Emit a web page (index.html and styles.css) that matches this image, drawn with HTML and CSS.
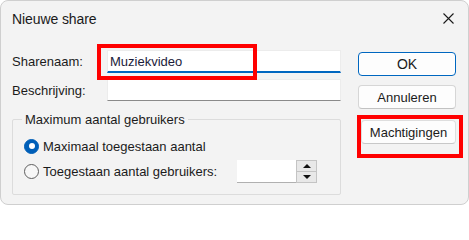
FILE: index.html
```html
<!DOCTYPE html>
<html lang="nl">
<head>
<meta charset="utf-8">
<title>Nieuwe share</title>
<link rel="stylesheet" href="styles.css">
</head>
<body>
<div class="window">
  <div class="titlebar">
    <span class="title">Nieuwe share</span>
    <svg class="close" width="11" height="11" viewBox="0 0 11 11" aria-hidden="true">
      <path d="M0.5 0.5 L10.5 10.5 M10.5 0.5 L0.5 10.5" stroke="#1a1a1a" stroke-width="1.1" fill="none"/>
    </svg>
  </div>
  <div class="main">
    <div class="form">
      <div class="row">
        <label class="lbl">Sharenaam:</label>
        <input class="field focused" type="text" value="Muziekvideo">
      </div>
      <div class="row row2">
        <label class="lbl">Beschrijving:</label>
        <input class="field" type="text" value="">
      </div>
      <fieldset class="group">
        <legend class="legend">Maximum aantal gebruikers</legend>
        <div class="opt opt1">
          <span class="radio checked"></span>
          <span class="opt-text">Maximaal toegestaan aantal</span>
        </div>
        <div class="opt opt2">
          <span class="radio"></span>
          <span class="opt-text fixed">Toegestaan aantal gebruikers:</span>
          <div class="spin">
            <div class="spin-field"></div>
            <div class="spin-btns">
              <div class="spin-btn"><span class="tri up"></span></div>
              <div class="spin-btn"><span class="tri down"></span></div>
            </div>
          </div>
        </div>
      </fieldset>
    </div>
    <div class="buttons">
      <div class="btn default">OK</div>
      <div class="btn">Annuleren</div>
      <div class="btn perm">Machtigingen</div>
    </div>
  </div>
  <div class="mark mark1"></div>
  <div class="mark mark2"></div>
</div>
</body>
</html>
```

FILE: styles.css
```css
* { box-sizing: border-box; }

html, body {
  margin: 0;
  padding: 0;
  background: #ffffff;
}

body {
  font-family: "Liberation Sans", Arial, sans-serif;
  font-size: 13px;
  color: #1b1b1b;
}

.window {
  position: relative;
  width: 469px;
  height: 205px;
  background: #f3f3f3;
  border: 1px solid #cfcfcf;
  border-radius: 8px;
  overflow: hidden;
}

.titlebar {
  height: 35px;
  display: flex;
  align-items: center;
  justify-content: space-between;
  padding: 0 14px 0 11px;
}

.title {
  font-size: 14px;
  color: #1a1a1a;
  letter-spacing: -0.1px;
}

.close {
  display: block;
}

.main {
  display: flex;
  padding: 14px 12px 0 11px;
}

.form {
  width: 329px;
  display: flex;
  flex-direction: column;
}

.row {
  display: flex;
  align-items: center;
  height: 23px;
}

.row2 {
  margin-top: 6px;
  height: 22px;
}

.lbl {
  width: 95px;
  flex: 0 0 95px;
  line-height: 15px;
}

.field {
  flex: 0 0 234px;
  width: 234px;
  height: 100%;
  margin: 0;
  padding: 0 0 0 2px;
  font-family: "Liberation Sans", Arial, sans-serif;
  font-size: 13px;
  color: #1b1b3a;
  background: #ffffff;
  border: 1px solid #ececec;
  border-bottom: 1px solid #8a8a8a;
  border-radius: 0;
  outline: none;
}

.field.focused {
  border-bottom: 2px solid #0067c0;
  padding-top: 1px;
}

.group {
  margin: 11px 0 0 0;
  padding: 0 0 11px 11px;
  border: 1px solid #dcdcdc;
  border-radius: 2px;
  min-width: 0;
}

.legend {
  padding: 0 3px;
  margin-left: -2px;
  line-height: 15px;
}

.opt {
  display: flex;
  align-items: center;
}

.opt1 {
  margin-top: 9px;
  height: 20px;
}

.opt2 {
  margin-top: 4px;
  height: 23px;
}

.radio {
  width: 15px;
  height: 15px;
  flex: 0 0 15px;
  border-radius: 50%;
  border: 1px solid #5f5f5f;
  background: #f7f7f7;
  margin-right: 4px;
  position: relative;
}

.radio.checked {
  background: #005fb8;
  border-color: #005fb8;
}

.radio.checked::after {
  content: "";
  position: absolute;
  left: 3.5px;
  top: 3.5px;
  width: 6px;
  height: 6px;
  border-radius: 50%;
  background: #ffffff;
}

.opt-text {
  line-height: 15px;
  white-space: nowrap;
}

.opt-text.fixed {
  width: 194px;
  flex: 0 0 194px;
}

.spin {
  display: flex;
  height: 23px;
}

.spin-field {
  width: 59px;
  height: 23px;
  background: #ffffff;
  border-bottom: 1px solid #b0b0b0;
}

.spin-btns {
  width: 21px;
  height: 23px;
  display: flex;
  flex-direction: column;
  border: 1px solid #c4c4c4;
  background: #e8e8e8;
}

.spin-btn {
  flex: 1;
  display: flex;
  align-items: center;
  justify-content: center;
}

.spin-btn + .spin-btn {
  border-top: 1px solid #c4c4c4;
}

.tri {
  width: 0;
  height: 0;
  border-left: 4px solid transparent;
  border-right: 4px solid transparent;
}

.tri.up {
  border-bottom: 4px solid #111;
}

.tri.down {
  border-top: 4px solid #111;
}

.buttons {
  margin-left: 17px;
  width: 98px;
  display: flex;
  flex-direction: column;
  padding-top: 2px;
}

.btn {
  height: 24px;
  display: flex;
  align-items: center;
  justify-content: center;
  background: #fdfdfd;
  border: 1px solid #d6d6d6;
  border-bottom-color: #c2c2c2;
  border-radius: 4px;
  color: #1b1b1b;
  line-height: 15px;
}

.btn + .btn {
  margin-top: 9px;
}

.btn.default {
  border: 1px solid #0067c0;
  box-shadow: inset 0 0 0 1px #ffffff;
  font-size: 14px;
}

.btn.perm {
  margin-top: 11px;
  margin-left: 3px;
  border-color: #dedede;
  border-bottom-color: #c8c8c8;
}

.mark {
  position: absolute;
  border: 4px solid #ff0000;
  pointer-events: none;
}

.mark1 {
  left: 96px;
  top: 43px;
  width: 160px;
  height: 36px;
}

.mark2 {
  left: 356px;
  top: 114px;
  width: 106px;
  height: 43px;
}
```
